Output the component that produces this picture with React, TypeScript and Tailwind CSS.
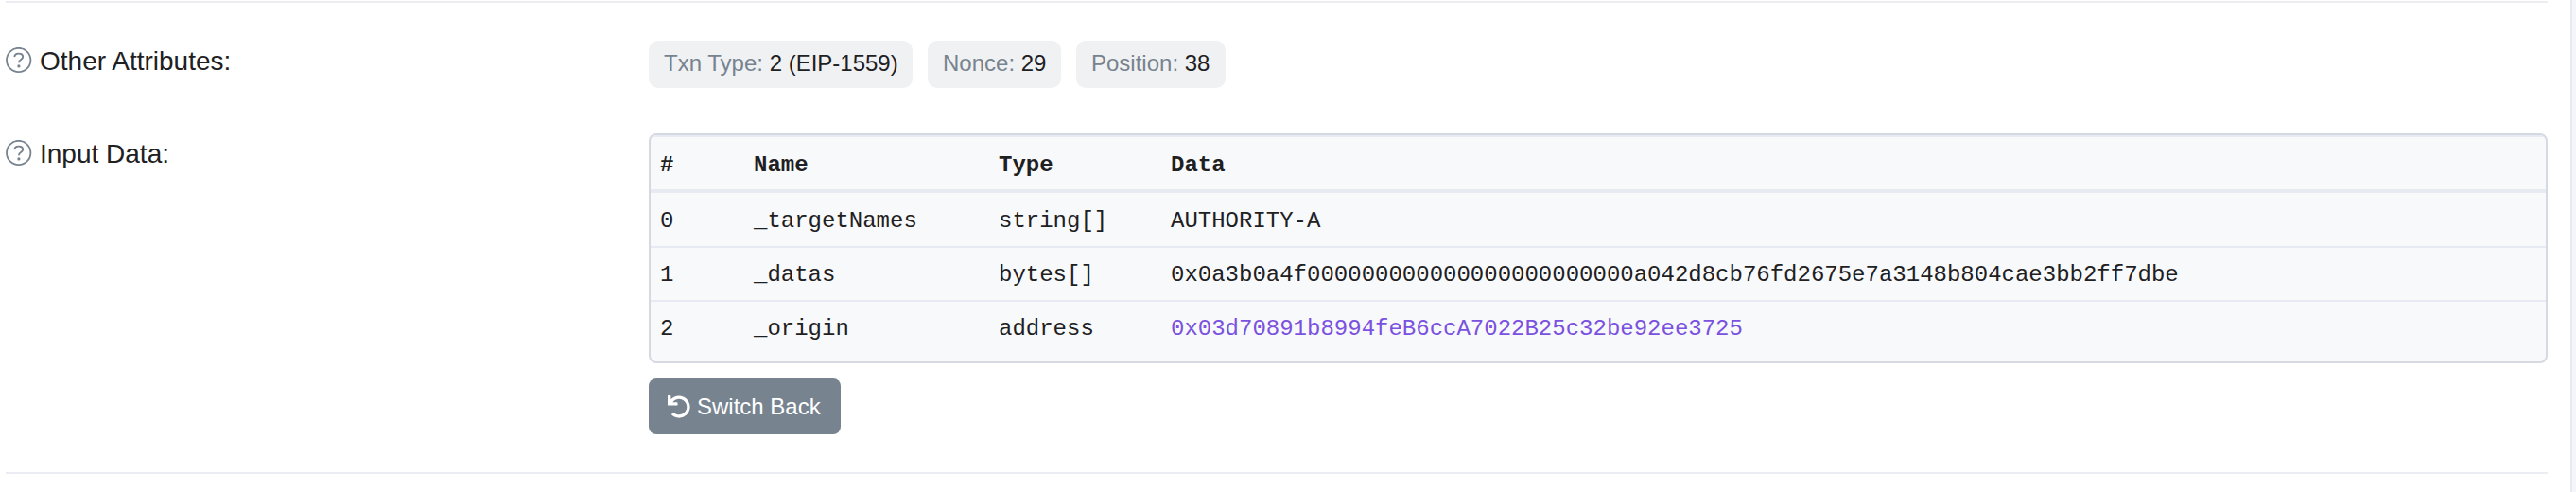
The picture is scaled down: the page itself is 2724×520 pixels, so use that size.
import { FaUndo } from "react-icons/fa";

const rows = [
  { name: "_targetNames", type: "string[]", data: "AUTHORITY-A", cell: "h-[58px] border-b-2 pt-[3px]" },
  {
    name: "_datas",
    type: "bytes[]",
    data: "0x0a3b0a4f000000000000000000000000a042d8cb76fd2675e7a3148b804cae3bb2ff7dbe",
    cell: "h-[57px] border-b-2 pt-0.5",
  },
  {
    name: "_origin",
    type: "address",
    data: "0x03d70891b8994feB6ccA7022B25c32be92ee3725",
    cell: "h-[55px] pt-0.5",
    link: true,
  },
];

function HelpIcon() {
  return (
    <svg className="-mt-0.5 size-7 shrink-0 text-[#77838f]" viewBox="0 0 28 28" fill="none" stroke="currentColor">
      <circle cx="13.7" cy="13.5" r="12.7" strokeWidth="1.8" />
      <path d="M9.3 10.1C9.5 7.7 11.1 6.6 13.7 6.6s4.5 1.3 4.5 3.5c0 3-4.2 2.8-4.2 5.8v.4" strokeWidth="1.9" />
      <circle cx="13.9" cy="19.9" r="1.6" fill="currentColor" stroke="none" />
    </svg>
  );
}

function Label({ text }: { text: string }) {
  return (
    <div className="flex h-10 w-[680px] shrink-0 items-center gap-2 text-[28px] leading-10">
      <HelpIcon />
      <span>{text}</span>
    </div>
  );
}

function Badge({ label, value, width }: { label: string; value: string; width: string }) {
  return (
    <div className={`h-[50px] rounded-[10px] bg-[#f0f1f3] pl-4 text-[24px] leading-[48px] whitespace-nowrap ${width}`}>
      <span className="text-[#77838f]">{label}</span> {value}
    </div>
  );
}

export default function App() {
  return (
    <div className="flex h-[520px] w-[2724px] overflow-hidden bg-white font-['Liberation_Sans',Arial,sans-serif] text-[#1e2022]">
      <div className="h-full w-[2720px] border-r-2 border-[#e7eaf3] pt-px pl-1.5">
        <div className="h-[500px] w-[2688px] border-y-2 border-[#ecedf2]">
          <div className="flex pt-10">
            <div className="pt-0.5">
              <Label text="Other Attributes:" />
            </div>
            <div className="flex gap-4">
              <Badge label="Txn Type:" value="2 (EIP-1559)" width="w-[279px]" />
              <Badge label="Nonce:" value="29" width="w-[141px]" />
              <Badge label="Position:" value="38" width="w-[158px]" />
            </div>
          </div>
          <div className="flex pt-12">
            <div className="pt-0.5">
              <Label text="Input Data:" />
            </div>
            <div className="w-[2008px]">
              <div className="h-[243px] overflow-hidden rounded-lg border-2 border-[#d5dae2] bg-[#f8f9fb] font-['Liberation_Mono','Courier_New',monospace] text-[24px] leading-7">
                <table className="w-full table-fixed border-separate border-spacing-0 text-left">
                  <colgroup>
                    <col className="w-[99px]" />
                    <col className="w-[259px]" />
                    <col className="w-[182px]" />
                    <col />
                  </colgroup>
                  <thead>
                    <tr>
                      {["#", "Name", "Type", "Data"].map((title) => (
                        <th key={title} className="h-[61px] border-t-2 border-b-4 border-[#e7eaf1] pt-1 pb-0 pl-2.5">
                          {title}
                        </th>
                      ))}
                    </tr>
                  </thead>
                  <tbody>
                    {rows.map((row, i) => (
                      <tr key={row.name}>
                        <td className={`border-[#e7eaf3] pb-0 pl-2.5 ${row.cell}`}>{i}</td>
                        <td className={`border-[#e7eaf3] pb-0 pl-2.5 ${row.cell}`}>{row.name}</td>
                        <td className={`border-[#e7eaf3] pb-0 pl-2.5 ${row.cell}`}>{row.type}</td>
                        <td className={`border-[#e7eaf3] pb-0 pl-2.5 ${row.cell}`}>
                          <span className={row.link ? "text-[#7b51df]" : ""}>{row.data}</span>
                        </td>
                      </tr>
                    ))}
                  </tbody>
                </table>
              </div>
              <button className="mt-4 flex h-[59px] w-[203px] items-center gap-[7px] rounded-lg bg-[#77838f] pl-5 text-[24px] leading-none text-white">
                <FaUndo className="size-6" />
                <span>Switch Back</span>
              </button>
            </div>
          </div>
        </div>
      </div>
      <div className="h-full w-1 bg-[#f4f5f8]" />
    </div>
  );
}
